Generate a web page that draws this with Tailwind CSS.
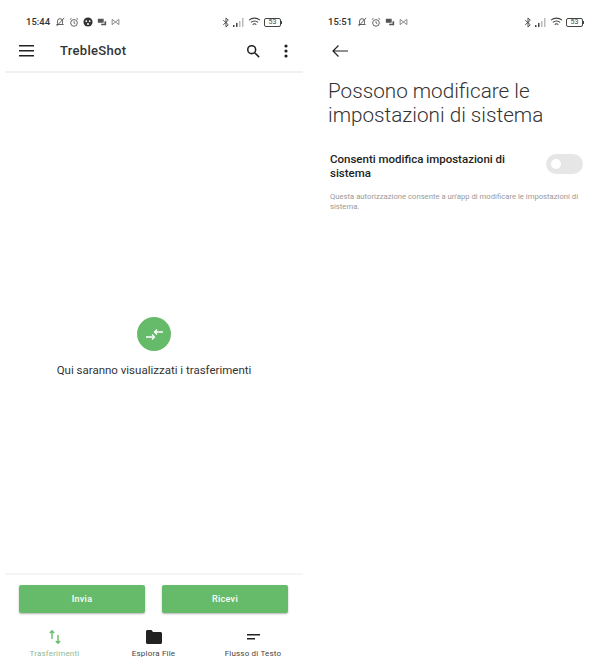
<!DOCTYPE html>
<html lang="it">
<head>
  <meta charset="UTF-8" />
  <title>TrebleShot</title>
  <script src="https://cdn.jsdelivr.net/npm/@tailwindcss/browser@4"></script>
</head>
<body class="bg-white">
  <div class="flex w-[610px] h-[670px] overflow-hidden bg-white font-['Roboto',sans-serif] text-[#212121]">

    <!-- TELEFONO SINISTRO -->
    <div class="w-[303px] h-full flex flex-col pl-[5px]">
      <div class="h-[36px] pt-[16px] pl-[21px] pr-[21px] flex items-start justify-between">
        <div class="flex items-center gap-[4px] h-[12px] text-[#444]">
          <span class="text-[9.5px] font-medium text-[#333] mr-[1px]">15:44</span>
          <svg class="w-[10px] h-[10px]" viewBox="0 0 12 12" fill="none" stroke="currentColor"><path d="M6 2a3 3 0 0 1 3 3v3l1 1H2l1-1V5a3 3 0 0 1 3-3zM2 11 11 1"/></svg>
          <svg class="w-[10px] h-[11px]" viewBox="0 0 12 12" fill="none" stroke="currentColor"><circle cx="6" cy="6.500" r="4"/><path d="M6 4.500v2l1.500 1M1 2.500 3 1M11 2.500 9 1"/></svg>
          <svg class="w-[10px] h-[10px]" viewBox="0 0 12 12"><circle cx="6" cy="6" r="5.500" fill="#333"/><circle cx="4" cy="5" r="1" fill="#fff"/><circle cx="8" cy="5" r="1" fill="#fff"/><circle cx="6" cy="8.500" r="1.200" fill="#fff"/></svg>
          <svg class="w-[10px] h-[10px]" viewBox="0 0 12 12"><path d="M1 2h7v5H1zM9 5h2v5H5V8h4z" fill="#555"/></svg>
          <svg class="w-[9px] h-[10px]" viewBox="0 0 12 12" fill="none" stroke="#666"><path d="M1.500 2.500v7l4.500-3.500 4.500 3.500v-7L6 6z"/></svg>
        </div>
        <div class="flex items-center gap-[3px] h-[12px] text-[#444]">
          <svg class="w-[8px] h-[11px]" viewBox="0 0 8 12" fill="none" stroke="#444"><path d="M1 3.500 6.500 8.500 4 11V1l2.500 2.500L1 8.500"/></svg>
          <svg class="w-[12px] h-[9px]" viewBox="0 0 12 9"><path d="M0 7h1.500v2H0zM3 5h1.500v4H3z" fill="#444"/><path d="M6 3h1.500v6H6zM9 0h1.500v9H9z" fill="#bbb"/></svg>
          <svg class="w-[13px] h-[10px]" viewBox="0 0 14 11" fill="none" stroke="#444" stroke-width="1.200"><path d="M1 3.500a9 9 0 0 1 12 0M3 6a6 6 0 0 1 8 0M5 8.300a3 3 0 0 1 4 0"/></svg>
          <div class="flex items-center">
            <div class="w-[17px] h-[9px] rounded-[2px] border border-[#444] flex items-center justify-center text-[7px] leading-none text-[#444]">53</div>
            <div class="w-[1px] h-[3px] bg-[#444]"></div>
          </div>
        </div>
      </div>

      <div class="h-[37px] flex items-center border-b-2 border-[#f1f1f1] pb-[6px]">
        <svg class="w-[16px] h-[12px] ml-[14px]" viewBox="0 0 16 12" fill="#222"><path d="M0 0h15v1.500H0zM0 5h15v1.500H0zM0 10h15v1.500H0z"/></svg>
        <span class="ml-[25px] text-[13px] font-medium tracking-[0.3px] text-[#333]">TrebleShot</span>
        <svg class="w-[14px] h-[14px] ml-auto" viewBox="0 0 16 16" fill="none" stroke="#222" stroke-width="1.800"><circle cx="6.500" cy="6.500" r="4.500"/><path d="m10 10 5 5"/></svg>
        <svg class="w-[4px] h-[14px] ml-[24px] mr-[15px]" viewBox="0 0 4 14" fill="#222"><circle cx="2" cy="2" r="1.600"/><circle cx="2" cy="7" r="1.600"/><circle cx="2" cy="12" r="1.600"/></svg>
      </div>

      <div class="flex-1 flex flex-col items-center pt-[244px]">
        <div class="w-[34px] h-[34px] rounded-full bg-[#66bb6a] flex items-center justify-center">
          <svg class="w-[17px] h-[11px]" viewBox="0 0 17 11" fill="none" stroke="#fff" stroke-width="1.300"><path d="M0 8h8M6 5.500 8.500 8 6 10.500M17 3H9M11 .5 8.500 3 11 5.500"/></svg>
        </div>
        <p class="mt-[10px] text-[11.500px] leading-[18px] text-[#333]">Qui saranno visualizzati i trasferimenti</p>
      </div>

      <div class="border-t-2 border-[#f5f5f5] h-[97px]">
        <div class="flex gap-[17px] pl-[14px] pt-[10px]">
          <button class="w-[126px] h-[28px] pt-[1px] rounded-[2px] bg-[#66bb6a] text-white text-[9px] font-medium tracking-[0.3px] shadow-[0_1px_2px_rgba(0,0,0,0.3)]">Invia</button>
          <button class="w-[126px] h-[28px] pt-[1px] rounded-[2px] bg-[#66bb6a] text-white text-[9px] font-medium tracking-[0.3px] shadow-[0_1px_2px_rgba(0,0,0,0.3)]">Ricevi</button>
        </div>
        <div class="flex mt-[17px] w-[298px]">
          <div class="w-[99px] flex flex-col items-center">
            <svg class="w-[12px] h-[14px]" viewBox="0 0 12 14" fill="none" stroke="#66bb6a" stroke-width="1.400"><path d="M3 9V1M.8 3 3 .8 5.200 3M9 5v8M6.800 11 9 13.200 11.200 11"/></svg>
            <span class="mt-[4px] text-[8px] leading-[12px] tracking-[0.2px] font-normal text-[#8fb892]">Trasferimenti</span>
          </div>
          <div class="w-[99px] flex flex-col items-center">
            <svg class="w-[16px] h-[14px]" viewBox="0 0 16 14" fill="#222"><path d="M0 1.500C0 .7.700 0 1.500 0h4L7 2h7.500c.8 0 1.500.7 1.500 1.500v9c0 .8-.7 1.500-1.500 1.500h-13C.7 14 0 13.300 0 12.500z"/></svg>
            <span class="mt-[4px] text-[8px] leading-[12px] tracking-[0.2px] text-[#444]">Esplora File</span>
          </div>
          <div class="w-[100px] flex flex-col items-center">
            <svg class="w-[13px] h-[14px]" viewBox="0 0 13 14" fill="#222"><path d="M0 4h13v1.500H0zM0 8h8v1.500H0z"/></svg>
            <span class="mt-[4px] text-[8px] leading-[12px] tracking-[0.2px] text-[#444]">Flusso di Testo</span>
          </div>
        </div>
      </div>
    </div>

    <!-- TELEFONO DESTRO -->
    <div class="w-[307px] h-full flex flex-col">
      <div class="h-[42px] pt-[16px] pl-[25px] pr-[26px] flex items-start justify-between">
        <div class="flex items-center gap-[4px] h-[12px] text-[#444]">
          <span class="text-[9.5px] font-medium text-[#333] mr-[1px]">15:51</span>
          <svg class="w-[10px] h-[10px]" viewBox="0 0 12 12" fill="none" stroke="currentColor"><path d="M6 2a3 3 0 0 1 3 3v3l1 1H2l1-1V5a3 3 0 0 1 3-3zM2 11 11 1"/></svg>
          <svg class="w-[10px] h-[11px]" viewBox="0 0 12 12" fill="none" stroke="currentColor"><circle cx="6" cy="6.500" r="4"/><path d="M6 4.500v2l1.500 1M1 2.500 3 1M11 2.500 9 1"/></svg>
          <svg class="w-[10px] h-[10px]" viewBox="0 0 12 12"><path d="M1 2h7v5H1zM9 5h2v5H5V8h4z" fill="#555"/></svg>
          <svg class="w-[9px] h-[10px]" viewBox="0 0 12 12" fill="none" stroke="#666"><path d="M1.500 2.500v7l4.500-3.500 4.500 3.500v-7L6 6z"/></svg>
        </div>
        <div class="flex items-center gap-[3px] h-[12px]">
          <svg class="w-[8px] h-[11px]" viewBox="0 0 8 12" fill="none" stroke="#444"><path d="M1 3.500 6.500 8.500 4 11V1l2.500 2.500L1 8.500"/></svg>
          <svg class="w-[12px] h-[9px]" viewBox="0 0 12 9"><path d="M0 7h1.500v2H0zM3 5h1.500v4H3z" fill="#444"/><path d="M6 3h1.500v6H6zM9 0h1.500v9H9z" fill="#bbb"/></svg>
          <svg class="w-[13px] h-[10px]" viewBox="0 0 14 11" fill="none" stroke="#444" stroke-width="1.200"><path d="M1 3.500a9 9 0 0 1 12 0M3 6a6 6 0 0 1 8 0M5 8.300a3 3 0 0 1 4 0"/></svg>
          <div class="flex items-center">
            <div class="w-[17px] h-[9px] rounded-[2px] border border-[#444] flex items-center justify-center text-[7px] leading-none text-[#444]">53</div>
            <div class="w-[1px] h-[3px] bg-[#444]"></div>
          </div>
        </div>
      </div>

      <div class="h-[18px] flex items-center pl-[29px]">
        <svg class="w-[16px] h-[12px]" viewBox="0 0 16 12" fill="none" stroke="#222" stroke-width="1.200"><path d="M16 6H1M6.500.5 1 6l5.500 5.500"/></svg>
      </div>

      <h1 class="mt-[19px] pl-[25px] text-[20.700px] leading-[24px] font-light text-[#333]">Possono modificare le<br>impostazioni di sistema</h1>

      <div class="mt-[25px] pl-[27px] pr-[27px] flex items-start justify-between">
        <p class="w-[190px] text-[11.500px] leading-[14px] font-medium text-[#222]">Consenti modifica impostazioni di sistema</p>
        <div class="w-[37px] h-[20px] rounded-full bg-[#e6e6e6] flex items-center pl-[5px] mt-[2px]">
          <div class="w-[10px] h-[10px] rounded-full bg-white"></div>
        </div>
      </div>

      <p class="mt-[12px] pl-[27px] pr-[20px] text-[7.700px] leading-[9.500px] text-[#999]">Questa autorizzazione consente a un'app di modificare le impostazioni di sistema.</p>
    </div>
  </div>
</body>
</html>
